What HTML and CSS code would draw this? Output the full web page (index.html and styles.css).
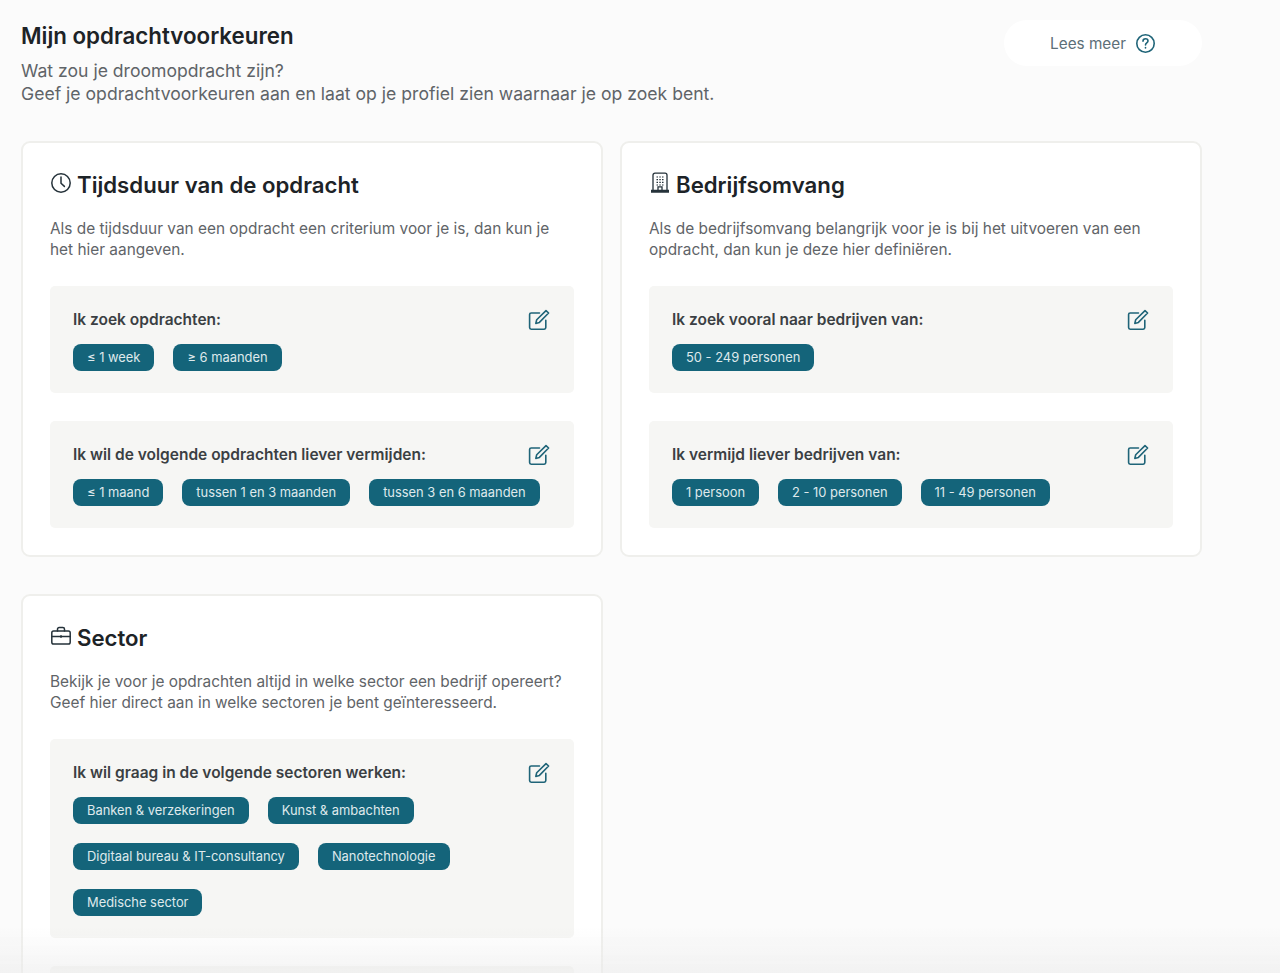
FILE: index.html
```html
<!DOCTYPE html>
<html>
  <head>
    <title>Mijn opdrachtvoorkeuren</title>
    <meta http-equiv="content-type" content="text/html;charset=utf-8">
    <link rel="stylesheet" href="styles.css">
  </head>
  <body>
    <div class="page">
      <div class="intro">
        <div>
          <h1>Mijn opdrachtvoorkeuren</h1>
          <p>Wat zou je droomopdracht zijn?<br>Geef je opdrachtvoorkeuren aan en laat op je profiel zien waarnaar je op zoek bent.</p>
        </div>
        <a class="more">Lees meer
          <svg width="21" height="21" viewBox="0 0 21 21" fill="none" stroke="#1f6478" stroke-width="1.6" stroke-linecap="round"><circle cx="10.5" cy="10.5" r="8.7"/><path d="M8 8.2c0-1.5 1.1-2.4 2.5-2.4s2.5.9 2.5 2.2c0 1.9-2.5 2-2.5 3.9"/><path d="M10.5 14.6v.3"/></svg>
        </a>
      </div>

      <div class="cards">
        <div class="card">
          <h2>
            <svg width="22" height="22" viewBox="0 0 22 22" fill="none" stroke="#25323a" stroke-width="1.5" stroke-linecap="round"><circle cx="11" cy="11" r="9.2"/><path d="M11 5v6.2l3.4 3.2"/></svg>
            Tijdsduur van de opdracht
          </h2>
          <p class="desc">Als de tijdsduur van een opdracht een criterium voor je is, dan kun je het hier aangeven.</p>
          <div class="panel">
            <div class="panel-head">
              <h3>Ik zoek opdrachten:</h3>
              <svg class="edit" width="22" height="22" viewBox="0 0 22 22" fill="none" stroke="#1f6478" stroke-width="1.6" stroke-linecap="round" stroke-linejoin="round"><path d="M11.5 4H3.2a1.6 1.6 0 0 0-1.6 1.6v13a1.6 1.6 0 0 0 1.6 1.6h13a1.6 1.6 0 0 0 1.6-1.6v-7.4"/><path d="M18 1.6 20.6 4 11.4 13.4l-3.6 1 .9-3.7z"/></svg>
            </div>
            <div class="tags">
              <span class="tag">≤ 1 week</span>
              <span class="tag">≥ 6 maanden</span>
            </div>
          </div>
          <div class="panel">
            <div class="panel-head">
              <h3>Ik wil de volgende opdrachten liever vermijden:</h3>
              <svg class="edit" width="22" height="22" viewBox="0 0 22 22" fill="none" stroke="#1f6478" stroke-width="1.6" stroke-linecap="round" stroke-linejoin="round"><path d="M11.5 4H3.2a1.6 1.6 0 0 0-1.6 1.6v13a1.6 1.6 0 0 0 1.6 1.6h13a1.6 1.6 0 0 0 1.6-1.6v-7.4"/><path d="M18 1.6 20.6 4 11.4 13.4l-3.6 1 .9-3.7z"/></svg>
            </div>
            <div class="tags">
              <span class="tag">≤ 1 maand</span>
              <span class="tag">tussen 1 en 3 maanden</span>
              <span class="tag">tussen 3 en 6 maanden</span>
            </div>
          </div>
        </div>

        <div class="card">
          <h2>
            <svg width="22" height="22" viewBox="0 0 22 22" fill="none" stroke="#25323a" stroke-width="1.3"><path d="M4 18.500V3.200c0-1.200.8-2 2-2h10c1.200 0 2 .8 2 2v15.300"/><path d="M2 20h18M2 18.500h18"/><path d="M9 18.500v-3.700h4v3.700"/><path d="M7.500 5h1.500M10.300 5h1.500M13 5h1.500M7.500 7.700h1.500M10.300 7.700h1.500M13 7.700h1.500M7.500 10.400h1.500M10.300 10.400h1.500M13 10.400h1.500M7.500 13h1.500M10.300 13h1.500M13 13h1.500" stroke-width="1.200"/></svg>
            Bedrijfsomvang
          </h2>
          <p class="desc">Als de bedrijfsomvang belangrijk voor je is bij het uitvoeren van een opdracht, dan kun je deze hier definiëren.</p>
          <div class="panel">
            <div class="panel-head">
              <h3>Ik zoek vooral naar bedrijven van:</h3>
              <svg class="edit" width="22" height="22" viewBox="0 0 22 22" fill="none" stroke="#1f6478" stroke-width="1.6" stroke-linecap="round" stroke-linejoin="round"><path d="M11.5 4H3.2a1.6 1.6 0 0 0-1.6 1.6v13a1.6 1.6 0 0 0 1.6 1.6h13a1.6 1.6 0 0 0 1.6-1.6v-7.4"/><path d="M18 1.6 20.6 4 11.4 13.4l-3.6 1 .9-3.7z"/></svg>
            </div>
            <div class="tags">
              <span class="tag">50 - 249 personen</span>
            </div>
          </div>
          <div class="panel">
            <div class="panel-head">
              <h3>Ik vermijd liever bedrijven van:</h3>
              <svg class="edit" width="22" height="22" viewBox="0 0 22 22" fill="none" stroke="#1f6478" stroke-width="1.6" stroke-linecap="round" stroke-linejoin="round"><path d="M11.5 4H3.2a1.6 1.6 0 0 0-1.6 1.6v13a1.6 1.6 0 0 0 1.6 1.6h13a1.6 1.6 0 0 0 1.6-1.6v-7.4"/><path d="M18 1.6 20.6 4 11.4 13.4l-3.6 1 .9-3.7z"/></svg>
            </div>
            <div class="tags">
              <span class="tag">1 persoon</span>
              <span class="tag">2 - 10 personen</span>
              <span class="tag">11 - 49 personen</span>
            </div>
          </div>
        </div>

        <div class="card">
          <h2>
            <svg width="22" height="22" viewBox="0 0 22 22" fill="none" stroke="#25323a" stroke-width="1.5" stroke-linecap="round" stroke-linejoin="round"><rect x="1.800" y="6" width="18.400" height="13" rx="1.800"/><path d="M7.500 6V4.200c0-1 .7-1.700 1.700-1.700h3.600c1 0 1.700.7 1.700 1.700V6"/><path d="M1.800 11.500h18.400"/><path d="M11 10.800v1.400"/></svg>
            Sector
          </h2>
          <p class="desc">Bekijk je voor je opdrachten altijd in welke sector een bedrijf opereert? Geef hier direct aan in welke sectoren je bent geïnteresseerd.</p>
          <div class="panel">
            <div class="panel-head">
              <h3>Ik wil graag in de volgende sectoren werken:</h3>
              <svg class="edit" width="22" height="22" viewBox="0 0 22 22" fill="none" stroke="#1f6478" stroke-width="1.6" stroke-linecap="round" stroke-linejoin="round"><path d="M11.5 4H3.2a1.6 1.6 0 0 0-1.6 1.6v13a1.6 1.6 0 0 0 1.6 1.6h13a1.6 1.6 0 0 0 1.6-1.6v-7.4"/><path d="M18 1.6 20.6 4 11.4 13.4l-3.6 1 .9-3.7z"/></svg>
            </div>
            <div class="tags">
              <span class="tag">Banken &amp; verzekeringen</span>
              <span class="tag">Kunst &amp; ambachten</span>
              <span class="tag">Digitaal bureau &amp; IT-consultancy</span>
              <span class="tag">Nanotechnologie</span>
              <span class="tag">Medische sector</span>
            </div>
          </div>
          <div class="panel"></div>
        </div>
      </div>
    </div>
    <div class="fade"></div>
  </body>
</html>
```

FILE: styles.css
```css
html, body {
  height: 973px;
  overflow: hidden;
}

body {
  font: 15.4px/21px Inter, "Open Sans", sans-serif;
  margin: 0;
  color: #5f6468;
  background: #fbfbfb;
}

.page {
  width: 1181px;
  padding: 21px 0 0 21px;
}

.intro {
  display: flex;
  justify-content: space-between;
  align-items: flex-start;
  margin-bottom: 36px;
}

h1 {
  margin: 0 0 8px;
  font-size: 22.3px;
  line-height: 30px;
  font-weight: 600;
  color: #1d2327;
}

.intro p {
  margin: 0;
  font-size: 17.6px;
  line-height: 23px;
}

.more {
  display: flex;
  align-items: center;
  justify-content: center;
  gap: 9px;
  width: 198px;
  height: 46px;
  margin-top: -1px;
  border-radius: 23px;
  background: #fff;
  color: #5d6f78;
  font-size: 15.3px;
}

.cards {
  display: grid;
  grid-template-columns: 582px 582px;
  column-gap: 17px;
  row-gap: 37px;
  align-items: start;
}

.card {
  box-sizing: border-box;
  padding: 27px 27px 27px;
  background: #fff;
  border: 2px solid #efefec;
  border-radius: 9px;
}

h2 {
  display: flex;
  align-items: center;
  gap: 5px;
  margin: 0 0 18px;
  font-size: 22.2px;
  line-height: 30px;
  font-weight: 600;
  color: #1d2327;
}

h2 svg {
  position: relative;
  top: -2px;
}

.desc {
  margin: 0 0 26px;
}

.panel {
  box-sizing: border-box;
  padding: 21px 23px 22px;
  min-height: 107px;
  background: #f6f6f4;
  border-radius: 5px;
}

.panel + .panel {
  margin-top: 28px;
}

.panel-head {
  display: flex;
  justify-content: space-between;
  align-items: center;
  height: 24px;
  margin-bottom: 13px;
}

h3 {
  margin: 0;
  font-size: 15.5px;
  font-weight: 600;
  color: #3b3f43;
}

.edit {
  position: relative;
  top: 1px;
  left: -1px;
}

.tags {
  display: flex;
  flex-wrap: wrap;
  gap: 19px;
}

.tag {
  display: block;
  height: 27px;
  padding: 0 14px;
  line-height: 28px;
  font-size: 12.9px;
  color: #dfe9ec;
  background: #14647a;
  border-radius: 8px;
}

.fade {
  position: fixed;
  left: 0;
  right: 0;
  bottom: 0;
  height: 45px;
  background: linear-gradient(rgba(235, 235, 235, 0), rgba(235, 235, 235, .55));
}
```
